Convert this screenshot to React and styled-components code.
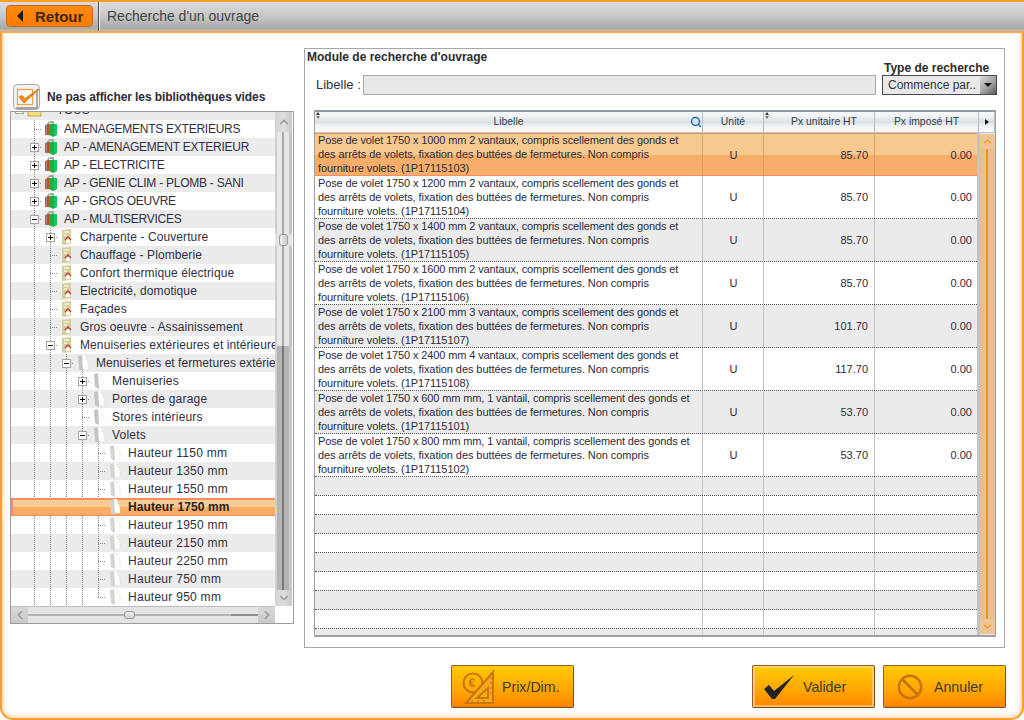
import React from 'react';
import styled, { createGlobalStyle } from 'styled-components';
import { ChevronUp, ChevronDown, ChevronLeft, ChevronRight, Search } from 'lucide-react';

const Global = createGlobalStyle`
  html, body { margin: 0; padding: 0; background: #fff; }
  body { font-family: "Liberation Sans", Arial, sans-serif; color: #333; }
  * { box-sizing: border-box; }
`;

const Shell = styled.div`
  width: 1024px; height: 720px; display: flex; flex-direction: column; overflow: hidden; background: #fff;
`;
const TopBar = styled.header`
  height: 33px; flex: none; display: flex; align-items: stretch;
  border-top: 2px solid #ff9c2a; border-bottom: 2px solid #ffa647;
  background: linear-gradient(#dcdcdc, #c4c4c4 55%, #a9a9a9 90%, #bdbdbd);
`;
const BackSlot = styled.div`
  width: 99px; flex: none; padding: 3px 6px 0 6px;
  border-right: 1px solid #4d4d4d; box-shadow: 1px 0 0 #eee;
`;
const BackButton = styled.button`
  width: 87px; height: 22px; padding: 0 0 0 10px; display: flex; align-items: center; gap: 12px;
  background: linear-gradient(#ff8a10, #ff7a00); border: 1px solid #c9650e; border-radius: 4px;
  box-shadow: inset 0 0 1px #ffb060;
  font: bold 15px "Liberation Sans", sans-serif; color: #3b2a14;
`;
const BackArrow = styled.span`
  width: 0; height: 0; border-style: solid; border-width: 6px 6px 6px 0;
  border-color: transparent #1c1c1c transparent transparent;
`;
const PageTitle = styled.h1`
  margin: 0 0 0 8px; font: normal 14px/29px "Liberation Sans", sans-serif; color: #444;
`;
const Main = styled.main`
  flex: 1; min-height: 0; display: flex; flex-direction: column;
  padding: 15px 0 10px 8px;
  border: 2px solid #ff9c2a; border-top: 0; border-radius: 0 0 13px 13px;
  box-shadow: inset 3px 0 3px -1px #ffe0b8, inset -3px 0 3px -1px #ffe0b8, inset 0 -4px 4px -1px #ffe6c8;
`;
const Work = styled.div`
  display: flex; gap: 10px; height: 600px; flex: none;
`;
const LeftCol = styled.section`
  width: 284px; flex: none; padding-top: 36px;
`;
const FilterRow = styled.label`
  height: 27px; display: flex; align-items: flex-start; gap: 6px; padding-left: 3px;
  font: bold 12px/26px "Liberation Sans", sans-serif; color: #2c2c3a; letter-spacing: -.08px;
`;
const Tree = styled.div`
  width: 284px; height: 513px; border: 1px solid #9c9c9c; display: grid;
  grid-template-columns: 264px 18px; grid-template-rows: 494px 17px; background: #fff;
`;
const Viewport = styled.div`
  overflow: hidden;
`;
const Row = styled.div`
  height: 18px; display: flex; align-items: center; white-space: nowrap; overflow: hidden;
  font: ${p => (p.$selected ? 'bold' : 'normal')} 12px/18px "Liberation Sans", sans-serif; color: ${p => (p.$selected ? '#222' : '#2f2f40')};
  letter-spacing: ${p => p.$track}px;
  background: ${p => (p.$selected
    ? 'linear-gradient(#f9cc95 0 50%, #f9ac66 50%)'
    : p.$shade ? '#ebebeb' : '#fff')};
  ${p => p.$selected && 'box-shadow: inset 0 2px 0 #f58f62, inset 0 -1px 0 #f58f62, inset 2px 0 0 #f58f62;'}
  ${p => p.$cut && 'margin-top: -10px; padding-bottom: 3px;'}
`;
const Lead = styled.span`
  width: 15px; height: 100%; flex: none; display: flex; align-items: center; justify-content: center;
`;
const dots = 'repeating-linear-gradient(to bottom, #8c8c8c 0 1px, transparent 1px 2px)';
const hdots = 'repeating-linear-gradient(to right, #8c8c8c 0 1px, transparent 1px 2px)';
const Guide = styled.span`
  width: 16px; height: 100%; flex: none; display: flex; align-items: center; justify-content: center;
  background-repeat: no-repeat;
  ${p => {
    if (p.$hidden) return '';
    if (p.$kind === 'line') return `background-image: ${dots}; background-size: 1px 100%; background-position: 8px 0;`;
    if (p.$kind === 'elbow') return `background-image: ${dots}, ${hdots}; background-size: 1px 10px, 8px 1px; background-position: 8px 0, 8px 9px;`;
    return `background-image: ${dots}, ${hdots}; background-size: 1px 100%, 8px 1px; background-position: 8px 0, 8px 9px;`;
  }}
`;
const Expander = styled.span`
  width: 9px; height: 9px; border: 1px solid #a5a595; background: #fff; position: relative; display: block; margin-left: 1px;
  &::before { content: ''; position: absolute; left: 1px; top: 3px; width: 5px; height: 1px; background: #111; }
  ${p => p.$plus && `&::after { content: ''; position: absolute; left: 3px; top: 1px; width: 1px; height: 5px; background: #111; }`}
`;
const IconSlot = styled.span`
  width: ${p => (p.$wide ? '26px' : '22px')}; height: 100%; flex: none; display: flex; align-items: center; padding-left: ${p => p.$pad}px;
`;
const VBar = styled.div`
  width: 17px; display: flex; flex-direction: column; align-items: stretch; background: #e4e4e4;
`;
const BarButton = styled.div`
  height: ${p => p.$h}px; flex: none; display: flex; align-items: center; justify-content: center; color: #9a9a9a;
  background: linear-gradient(90deg, #d2d2d2, #dedede 50%, #c8c8c8);
`;
const LightTrack = styled.div`
  height: ${p => p.$h}px; flex: none;
  background: linear-gradient(90deg, #cfcfcf 0 2px, #e8e8e8 2px 7px, #a8a8a8 7px 9px, #e8e8e8 9px 14px, #c4c4c4 14px);
`;
const DarkTrack = styled.div`
  flex: 1;
  background: linear-gradient(90deg, #d0d0d0 0 2px, #b4b4b4 2px 7px, #777 7px 9px, #b4b4b4 9px 14px, #c8c8c8 14px);
`;
const VThumb = styled.div`
  height: 12px; flex: none; margin: 0 4px; border: 1px solid #9a9a9a; border-radius: 3px; background: linear-gradient(90deg, #eee, #cfcfcf);
`;
const HBar = styled.div`
  display: flex; align-items: stretch; background: #e2e2e2; border-top: 1px solid #bdbdbd;
`;
const HButton = styled.div`
  width: 17px; flex: none; display: flex; align-items: center; justify-content: center; color: #9a9a9a;
  background: linear-gradient(#d8d8d8, #cacaca);
`;
const HTrack = styled.div`
  width: ${p => p.$w}px; flex: none;
  background: linear-gradient(#e4e4e4 0 7px, ${p => (p.$dark ? '#8e8e8e' : '#b4b4b4')} 7px 9px, #e4e4e4 9px);
  ${p => p.$dark && 'flex: 1; width: auto;'}
`;
const HThumb = styled.div`
  width: 11px; flex: none; margin: 4px 0; border: 1px solid #9a9a9a; border-radius: 3px; background: linear-gradient(#eee, #cfcfcf);
`;
const Corner = styled.div`background: #fff;`;

const Panel = styled.section`
  width: 701px; flex: none; border: 1px solid #a8a8a8; display: flex; flex-direction: column;
`;
const PanelTitle = styled.h2`
  margin: 0; height: 13px; padding-left: 2px; font: bold 12px/16px "Liberation Sans", sans-serif; color: #2c2c2c;
`;
const SearchRow = styled.div`
  display: flex; align-items: flex-end; height: 33px; padding-left: 11px;
`;
const FieldLabel = styled.span`
  width: 47px; flex: none; font: 13px/20px "Liberation Sans", sans-serif; color: #333; white-space: nowrap;
`;
const TextField = styled.div`
  width: 513px; height: 20px; flex: none; border: 1px solid #aaa; background: #e8e8e8;
`;
const TypeCol = styled.div`
  margin-left: 6px; width: 115px; flex: none; display: flex; flex-direction: column;
`;
const TypeLabel = styled.span`
  height: 13px; padding-left: 2px; font: bold 12px/12px "Liberation Sans", sans-serif; color: #2c2c2c; white-space: nowrap;
`;
const Select = styled.div`
  height: 20px; border: 1px solid #4a4a4a; background: #e8e8e8; display: flex; justify-content: space-between;
  padding-left: 5px; font: 12px/18px "Liberation Sans", sans-serif; color: #333;
`;
const SelectButton = styled.span`
  width: 16px; flex: none; display: flex; align-items: center; justify-content: center;
  background: linear-gradient(135deg, #d9d9d9, #9c9c9c 60%, #5a5a5a);
  &::after { content: ''; border-style: solid; border-width: 4px 4px 0 4px; border-color: #111 transparent transparent; }
`;

const Table = styled.div`
  margin: 15px 0 0 9px; width: 682px; height: 527px; display: flex; flex-direction: column;
  border: 1px solid #a0a0a0; border-top: 0; border-bottom: 2px solid #a0a0a0;
`;
const HeadRow = styled.div`
  height: 23px; flex: none; display: grid; grid-template-columns: 388px 61px 111px 104px 16px;
  border-top: 2px solid #8d9aa3; border-bottom: 1px solid #b9cad3;
`;
const HeadCell = styled.div`
  position: relative; display: flex; align-items: center; justify-content: center;
  padding-left: ${p => p.$pl || 0}px;
  border-right: 1px solid #b7c0c6; font: 10.4px/20px "Liberation Sans", sans-serif; color: #2f3f4a;
  background: linear-gradient(#f8fafb, #eef1f3 25%, #d9e0e4 50%, #eef2f4 68%, #fbfcfd);
`;
const SortMark = styled.span`
  position: absolute; left: 1px; top: 0; width: 5px; height: 7px;
  &::before, &::after { content: ''; position: absolute; left: 0; border-style: solid; border-color: transparent; }
  &::before { top: 0; border-width: 0 2.5px 3px; border-bottom-color: #333; }
  &::after { bottom: 0; border-width: 3px 2.5px 0; border-top-color: #777; }
`;
const HeadSearch = styled.span`
  position: absolute; right: 0; top: 4px; color: #1c6fb5; display: flex;
`;
const MenuArrow = styled.span`
  width: 0; height: 0; border-style: solid; border-width: 3px 0 3px 4px; border-color: transparent transparent transparent #111;
`;
const TableBody = styled.div`
  flex: 1; min-height: 0; display: flex;
`;
const Rows = styled.div`
  width: 662px; flex: none; overflow: hidden;
`;
const DataRow = styled.div`
  display: grid; grid-template-columns: 388px 61px 111px 102px;
  height: ${p => p.$h}px;
  font: 11px/14px "Liberation Sans", sans-serif; color: #2b2b3a;
  background: ${p => (p.$selected ? 'linear-gradient(#f8c98f 0 50%, #f7ae6a 50%)' : p.$shade ? '#ebebeb' : '#fff')};
  ${p => (p.$selected
    ? 'box-shadow: inset 0 1px 0 #f58f62, inset 0 -1px 0 #f58f62;'
    : p.$last ? '' : 'border-bottom: 1px dotted #555;')}
`;
const Cell = styled.div`
  padding: 0 ${p => p.$pr || 0}px 0 3px; display: flex; align-items: center;
  justify-content: ${p => p.$align || 'flex-start'};
  border-right: ${p => (p.$end ? '0' : '1px solid #c2c2c2')};
  ${p => p.$selected && 'border-right-color: rgba(200,150,110,.7);'}
`;
const Lines = styled.div`
  display: flex; flex-direction: column; white-space: nowrap; letter-spacing: -.07px; margin-top: -1px;
`;
const FirstLine = styled.span`
  letter-spacing: -.12px;
`;
const OrangeBar = styled.div`
  width: 18px; flex: none; display: flex; flex-direction: column; border-left: 3px solid #c3c3c3; padding: 1px 0 1px 0; background: #e9e9e9;
`;
const OrangeBtn = styled.div`
  height: 15px; flex: none; display: flex; align-items: center; justify-content: center; color: #f59a20; background: #efc596; 
`;
const OrangeTrack = styled.div`
  flex: 1; background: linear-gradient(90deg, #e6bf97 0 6px, #f09410 6px 8px, #e6bf97 8px);
`;

const Footer = styled.footer`
  margin-top: 17px; height: 43px; flex: none; display: flex; gap: 8px; padding-left: 441px;
`;
const Action = styled.button`
  width: 123px; height: 43px; padding: 0 0 0 ${p => p.$pad}px; display: flex; align-items: center; gap: ${p => p.$gap}px;
  margin-right: ${p => (p.$push ? '170px' : '0')};
  background: linear-gradient(#ffcb05, #ffa500 60%, #ff8400);
  border: 1px solid #96602a; border-right-color: #7a4a18; border-bottom-color: #7a4a18; border-radius: 2px;
  font: 14.2px "Liberation Sans", sans-serif; color: #3d3a24;
  ${p => p.$focus && 'box-shadow: inset 0 0 0 2px rgba(255,210,130,.75);'}
`;

const CheckIcon = () => (
  <svg width="28" height="27" viewBox="0 0 28 27">
    <rect x="0.5" y="0.5" width="26" height="25" rx="4" fill="#f2f2f2" stroke="#a8a8a8" />
    <path d="M3 24 H24 V5" fill="none" stroke="#8f8f8f" strokeWidth="1.4" />
    <rect x="4.5" y="5.5" width="15" height="15" fill="#fff" stroke="#f0a040" strokeWidth="1.2" />
    <path d="M6 13 L11 19 L26 5 L12 14.5 L9 11.5 Z" fill="#f08a10" stroke="#d87808" strokeWidth="1" />
  </svg>
);
const BookIcon = () => (
  <svg width="13" height="16" viewBox="0 0 13 16">
    <path d="M2 4 C2 1 4 0 6 0 H9 V4 H7 V2 H5 C4 2 4 3 4 4 Z" fill="#a6aca2" />
    <rect x="0" y="4" width="1.5" height="10" fill="#3a7fc8" />
    <rect x="1.5" y="3" width="2.5" height="11" fill="#d24a18" />
    <path d="M4 3 H12 V14 L8 16 L4 14 Z" fill="#1fae45" />
    <rect x="9" y="3" width="3" height="11" fill="#14c85c" />
  </svg>
);
const LibIcon = () => (
  <svg width="10" height="16" viewBox="0 0 10 16">
    <path d="M0 1 L9 0 V15 L0 16 Z" fill="#d6cd98" />
    <path d="M2 3 H7 M2 6 H5" stroke="#f6f2d8" strokeWidth="1.4" />
    <rect x="4" y="10" width="4" height="4" fill="#fff" />
    <path d="M3 11 L6 8 L9 11" fill="none" stroke="#c03a38" strokeWidth="1.4" />
  </svg>
);
const PageIcon = ({ pale }) => (
  <svg width="11" height="16" viewBox="0 0 11 16">
    <path d="M0 1 L5 0 V16 L1 14 Z" fill={pale ? '#d2d2d2' : '#c4c4c4'} />
    <path d="M4 0 H7 L10 8 V14 H5 Z" fill="#fffefa" />
    <path d="M7 1 L10 8 V15" fill="none" stroke={pale ? '#c8c8a0' : '#dedeb8'} strokeWidth="1" strokeDasharray="1 2" />
  </svg>
);
const FolderIcon = () => (
  <svg width="15" height="14" viewBox="0 0 15 14">
    <path d="M1 3 L4 0 H8 L9 2 H14 V13 H1 Z" fill="#fadf80" stroke="#b59434" strokeWidth=".8" />
  </svg>
);
const RulerIcon = () => (
  <svg width="34" height="37" viewBox="0 0 34 37">
    <g fill="none" stroke="#c9760f">
      <circle cx="11" cy="15" r="9.5" strokeWidth="2" />
      <path d="M31 4 V35 H4 Z" fill="#f8a818" strokeWidth="2" />
      <path d="M26 20 V30 H15 Z" strokeWidth="2" />
      <path d="M28 10 h3 M28 15 h3 M28 20 h3 M28 25 h3 M10 35 v-3 M16 35 v-3 M22 35 v-3" strokeWidth="1" />
    </g>
    <text x="6.5" y="19" fontFamily="Liberation Sans, sans-serif" fontWeight="bold" fontSize="12" fill="#c9760f">€</text>
  </svg>
);
const TickIcon = () => (
  <svg width="32" height="26" viewBox="0 0 32 26">
    <path d="M1 15 L6 11 L11 17 L31 1 L12 25 L9 25 Z" fill="#232323" />
  </svg>
);
const BanIcon = () => (
  <svg width="26" height="26" viewBox="0 0 26 26">
    <circle cx="13" cy="13" r="11.2" fill="none" stroke="#c8720e" strokeWidth="2.4" />
    <path d="M5.5 5.5 L20.5 20.5" stroke="#c8720e" strokeWidth="2.6" />
  </svg>
);

const ICONS = {
  folder: <FolderIcon />, book: <BookIcon />, lib: <LibIcon />,
  page: <PageIcon />, leaf: <PageIcon pale />,
};
const PADS = { folder: 1, book: 3, lib: 4, page: 4, leaf: 4 };
const TRACK = { '-1': 0, 0: -0.25, 1: 0.1, 2: 0.05, 3: 0.2, 4: 0.27 };

const NODES = [
  ['*TOUS*', -1, 'folder', '-'],
  ['AMENAGEMENTS EXTERIEURS', 0, 'book'],
  ['AP - AMENAGEMENT EXTERIEUR', 0, 'book', '+'],
  ['AP - ELECTRICITE', 0, 'book', '+'],
  ['AP - GENIE CLIM - PLOMB - SANI', 0, 'book', '+'],
  ['AP - GROS OEUVRE', 0, 'book', '+'],
  ['AP - MULTISERVICES', 0, 'book', '-'],
  ['Charpente - Couverture', 1, 'lib', '+'],
  ['Chauffage - Plomberie', 1, 'lib'],
  ['Confort thermique électrique', 1, 'lib'],
  ['Electricité, domotique', 1, 'lib'],
  ['Façades', 1, 'lib'],
  ['Gros oeuvre - Assainissement', 1, 'lib'],
  ['Menuiseries extérieures et intérieures', 1, 'lib', '-'],
  ['Menuiseries et fermetures extérieures', 2, 'page', '-'],
  ['Menuiseries', 3, 'page', '+'],
  ['Portes de garage', 3, 'page', '+'],
  ['Stores intérieurs', 3, 'page'],
  ['Volets', 3, 'page', '-'],
  ['Hauteur 1150 mm', 4, 'leaf'],
  ['Hauteur 1350 mm', 4, 'leaf'],
  ['Hauteur 1550 mm', 4, 'leaf'],
  ['Hauteur 1750 mm', 4, 'leaf', null, true],
  ['Hauteur 1950 mm', 4, 'leaf'],
  ['Hauteur 2150 mm', 4, 'leaf'],
  ['Hauteur 2250 mm', 4, 'leaf'],
  ['Hauteur 750 mm', 4, 'leaf'],
  ['Hauteur 950 mm', 4, 'leaf', null, false, true],
];

const TreeRow = ({ node, index }) => {
  const [label, level, icon, exp, selected, last] = node;
  const root = level < 0;
  const cells = [];
  for (let i = 0; i < level; i += 1) cells.push(<Guide key={i} $kind="line" $hidden={selected} />);
  return (
    <Row $selected={selected} $shade={index % 2 === 0} $cut={root} $track={selected ? 0.1 : TRACK[level]}>
      <Lead>{root && <Expander />}</Lead>
      {cells}
      {!root && (
        <Guide $kind={last ? 'elbow' : 'tee'} $hidden={selected}>
          {exp && <Expander $plus={exp === '+'} />}
        </Guide>
      )}
      <IconSlot $pad={PADS[icon]} $wide={root}>{ICONS[icon]}</IconSlot>
      {label}
    </Row>
  );
};

const DESC2 = 'compris scellement des gonds et';
const TAIL2 = 'des arrêts de volets, fixation des buttées de fermetures. Non compris';
const ITEMS = [
  ['Pose de volet 1750 x 1000 mm 2 vantaux,', '1P17115103', '85.70'],
  ['Pose de volet 1750 x 1200 mm 2 vantaux,', '1P17115104', '85.70'],
  ['Pose de volet 1750 x 1400 mm 2 vantaux,', '1P17115105', '85.70'],
  ['Pose de volet 1750 x 1600 mm 2 vantaux,', '1P17115106', '85.70'],
  ['Pose de volet 1750 x 2100 mm 3 vantaux,', '1P17115107', '101.70'],
  ['Pose de volet 1750 x 2400 mm 4 vantaux,', '1P17115108', '117.70'],
  ['Pose de volet 1750 x 600 mm mm, 1 vantail,', '1P17115101', '53.70'],
  ['Pose de volet 1750 x 800 mm mm, 1 vantail,', '1P17115102', '53.70'],
];

export default function App() {
  return (
    <Shell>
      <Global />
      <TopBar>
        <BackSlot>
          <BackButton><BackArrow />Retour</BackButton>
        </BackSlot>
        <PageTitle>Recherche d'un ouvrage</PageTitle>
      </TopBar>
      <Main>
        <Work>
          <LeftCol>
            <FilterRow><CheckIcon />Ne pas afficher les bibliothèques vides</FilterRow>
            <Tree>
              <Viewport>
                {NODES.map((n, i) => <TreeRow key={n[0]} node={n} index={i} />)}
              </Viewport>
              <VBar>
                <BarButton $h={20}><ChevronUp size={14} strokeWidth={2.5} /></BarButton>
                <LightTrack $h={102} />
                <VThumb />
                <LightTrack $h={100} />
                <DarkTrack />
                <BarButton $h={16}><ChevronDown size={14} strokeWidth={2.5} /></BarButton>
              </VBar>
              <HBar>
                <HButton><ChevronLeft size={14} strokeWidth={2.5} /></HButton>
                <HTrack $w={96} />
                <HThumb />
                <HTrack $w={96} />
                <HTrack $dark />
                <HButton><ChevronRight size={14} strokeWidth={2.5} /></HButton>
              </HBar>
              <Corner />
            </Tree>
          </LeftCol>
          <Panel>
            <PanelTitle>Module de recherche d'ouvrage</PanelTitle>
            <SearchRow>
              <FieldLabel>Libelle :</FieldLabel>
              <TextField />
              <TypeCol>
                <TypeLabel>Type de recherche</TypeLabel>
                <Select>Commence par..<SelectButton /></Select>
              </TypeCol>
            </SearchRow>
            <Table>
              <HeadRow>
                <HeadCell><SortMark />Libelle<HeadSearch><Search size={12} strokeWidth={3} /></HeadSearch></HeadCell>
                <HeadCell>Unité</HeadCell>
                <HeadCell $pl={10}><SortMark />Px unitaire HT</HeadCell>
                <HeadCell>Px imposé HT</HeadCell>
                <HeadCell><MenuArrow /></HeadCell>
              </HeadRow>
              <TableBody>
                <Rows>
                  {ITEMS.map((it, i) => (
                    <DataRow key={it[1]} $h={43} $selected={i === 0} $shade={i % 2 === 0}>
                      <Cell $selected={i === 0}>
                        <Lines>
                          <FirstLine>{it[0]} {DESC2}</FirstLine>
                          <span>{TAIL2}</span>
                          <span>fourniture volets. ({it[1]})</span>
                        </Lines>
                      </Cell>
                      <Cell $align="center" $pr={2} $selected={i === 0}>U</Cell>
                      <Cell $align="flex-end" $pr={6} $selected={i === 0}>{it[2]}</Cell>
                      <Cell $align="flex-end" $pr={5} $end>0.00</Cell>
                    </DataRow>
                  ))}
                  {[0, 1, 2, 3, 4, 5, 6, 7, 8].map(i => (
                    <DataRow key={i} $h={i === 8 ? 8 : 19} $shade={i % 2 === 0} $last={i === 8}>
                      <Cell /><Cell /><Cell /><Cell $end />
                    </DataRow>
                  ))}
                </Rows>
                <OrangeBar>
                  <OrangeBtn><ChevronUp size={13} strokeWidth={2.5} /></OrangeBtn>
                  <OrangeTrack />
                  <OrangeBtn><ChevronDown size={13} strokeWidth={2.5} /></OrangeBtn>
                </OrangeBar>
              </TableBody>
            </Table>
          </Panel>
        </Work>
        <Footer>
          <Action $pad={10} $gap={6} $push><RulerIcon />Prix/Dim.</Action>
          <Action $pad={10} $gap={8} $focus><TickIcon />Valider</Action>
          <Action $pad={13} $gap={11}><BanIcon />Annuler</Action>
        </Footer>
      </Main>
    </Shell>
  );
}
